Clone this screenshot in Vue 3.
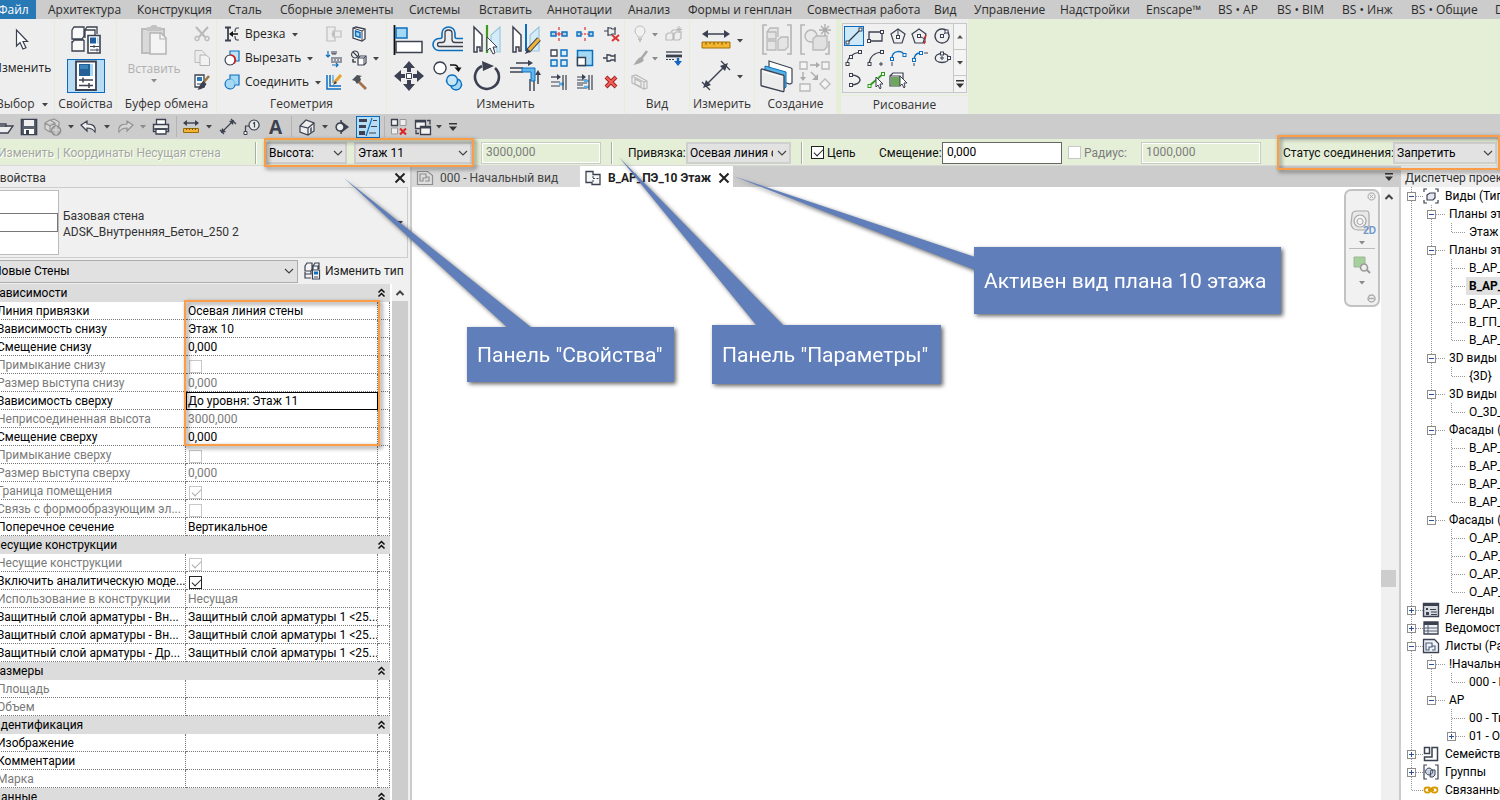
<script setup>
import { h } from 'vue'

const D = '#3b4150'
const B = '#0b6fc0'
const L = '#a5d8f3'
const G = '#b9b9b9'

const s = (d, c = D, w = 1.5, f = 'none') => `<path d="${d}" stroke="${c}" stroke-width="${w}" fill="${f}"/>`
const f = (d, c = D) => `<path d="${d}" fill="${c}"/>`
const node = (x, y, c = D) => `<rect x="${x - 1.5}" y="${y - 1.5}" width="3" height="3" fill="#fff" stroke="${c}"/>`

const icons = {
  arrow: [8, 5, f('M1 1h6l-3 3.5z', '#444')],
  arrowUp: [8, 5, f('M1 4.5h6l-3-3.5z', '#555')],
  arrowDim: [8, 5, f('M1 1h6l-3 3.5z', '#8a8a8a')],
  chevron: [12, 8, s('M2 2l4 4 4-4', '#444', 1.2)],
  chevUp: [10, 8, s('M1.500 6l3.500-3.500 3.500 3.500', '#444', 2)],
  menuDown: [10, 8, f('M1 0h8v1.500H1zM1 3.500h8l-4 4.500z', '#333')],
  close: [12, 12, s('M1.500 1.500l9 9M10.500 1.500l-9 9', '#222', 2)],
  collapse: [9, 10, s('M1.500 4.500l3-3 3 3M1.500 8.500l3-3 3 3', '#111', 1.5)],
  cursor: [14, 22, s('M1.500 1v16l3.500-3.500 3 6.500 3-1.300-3-6.200h4.500z', D, 1.2, '#fff')],
  props: [32, 32, s('M2 6l2-3h10v9l-2 3H2zM15 6l2-3h10v7M2 19l2-3h10M2 17v10h12V16M15 14V6h10v6', D, 1.3, '#fafafa') + s('M18 11.500h12v17.500H18z', D, 1.600, '#fff') + f('M20 13.500h6v6h-6z', '#1f5f9f') + f('M27 13.500h1.500v6H27z', L) + s('M20 22.500h9M20 26h9M24 21v3M27 24.500v3', D, 1)],
  propsBtn: [24, 32, s('M2 1.500h20v28.500H2z', D, 1.8, '#fff') + f('M5 4h11v12H5z', '#245f95') + f('M6 5h8v4H6z', '#3d84bd') + f('M16 4h3v12h-3z', L) + s('M5 20h14M5 25.500h14M9 17.500v5M15 23v5', D, 1.500)],
  paste: [28, 32, s('M2 5h22v24H2z', '#bcbcbc', 2, '#d9d9d9') + f('M7 3h3l2-2h4l2 2h3v4H7z', '#c3c3c3') + s('M10 9h11l5 5v16H10z', '#b4b4b4', 1.500, '#f4f4f4') + s('M20 9v6h6', '#b4b4b4', 1.200)],
  cut: [16, 16, s('M2 1l9 10M14 1L5 11', G, 2) + s('M3 10.500a2 2 0 1 0 .1 0zM13 10.500a2 2 0 1 0 .1 0z', '#bdbdbd', 1.500)],
  copy: [16, 16, s('M1 .500h7l3 3v9H1z', '#bdbdbd', 1, '#ebebeb') + s('M6 5h6l3.500 3v7.500H6z', '#b4b4b4', 1, '#f2f2f2')],
  match: [16, 16, s('M1 1h9v12H1z', D, 1.300, '#fff') + f('M3 3h5v4H3z', '#2a78b8') + s('M3 10h5', D, 1) + s('M15 2l-6 7', '#9a7546', 2.500) + f('M9.500 7l3 3c-2 4-5 5-9 6 2-3 2-6 6-9z', D)],
  cope: [16, 16, s('M1 1.500h6M1 14.500h6M4 1v14', D, 1.800) + s('M15 2h-2c-2 0-2 2-2 4M15 14h-2c-2 0-2-2-2-4', D, 1.200) + s('M6 8h8', '#111', 1.500) + f('M5 8l4-3v6z', '#111')],
  cutGeo: [16, 16, s('M6 1h9v10H6z', B, 1.200, '#bfe4f7') + s('M6 5a5 5 0 1 0 .1 0z', D, 1.200, '#fff') + s('M6.500 5a5 5 0 0 1 3.500 8.500', '#e02020', 1.500)],
  join: [16, 16, s('M6 1h9v10h-4a5 5 0 1 1-5-6z', B, 1.200, L) + s('M6 5c3 0 5 2 5 6', '#69b5e2', 1)],
  wallJoin: [16, 16, s('M1 1h8v4H7v6h2v4H1zM9 5h6v6H9', '#bebebe', 1.200, '#ededed') + f('M5 8l4-3v6z', '#bebebe')],
  wallOpen: [14, 16, s('M1 2l3-1 9 2v10l-3 2-9-3z', D, 1.300, '#fff') + s('M3.500 5l4.500 1.500v5l-4.500-1.500z', B, 1.500, L) + s('M10 5v10M10 5l3-2M1 2l9 3', D, 1)],
  beam: [16, 16, s('M2 1v6M0 5l2 2 2-2', B, 1.200) + s('M6 1v3h4V1M8 1v3', D, 1) + s('M5 8h11M5 12h11', D, 1.200) + s('M5 10h2M8 10h2M11 10h2M14 10h2', D, 1) + s('M6 15h6M10 13l2 2-2 2', B, 1.200)],
  split: [18, 16, s('M5 1a3.500 3.500 0 1 0 .1 0zM3 2l5 5', D, 1.100) + s('M8 8l2-2h6v7l-2 2H8z', D, 1.200, '#fff') + s('M8 8h6v7M14 8l2-2', D, 1) + s('M3 9v3h3', '#111', 1.200)],
  pencilGrid: [16, 16, s('M1 1v14h14M4 1v11h11', B, 1.500) + s('M7 1v8', '#8db9da', 2) + s('M15 1L8 9', '#e6a32c', 3) + f('M9 7l2 2-4 2z', D)],
  hammer: [16, 16, s('M7 7l8 8', '#a5704c', 2.600) + f('M1 6l5-5 5 1-2 1 1 3-4 4-2-3z', '#4d5158')],
  align: [32, 32, s('M1.500 1v30', '#111', 1.800) + s('M3 4h11v10H3z', B, 1.500, L) + s('M3 17.500h26v11H3z', D, 1.500, '#fff')],
  offset: [32, 32, s('M31 14.500h-6q-2 0-2-2V9a6.500 6 0 0 0-13 0v3.500q0 2-2 2H7a6 6 0 0 0 0 12h24', B, 1.600) + s('M31 18.500h-8q-3 0-3-3V9a3.500 3 0 0 0-7 0v6.500q0 3-3 3H7.500q-2 0-2 2t2 2H31', D, 1.300)],
  mirrorPick: [32, 32, s('M3 3l8 8v16H9v-4H6v5H3z', D, 1.500, '#fff') + s('M29 3l-9 8v16h3v-4h3v5h3z', '#9cc7dc', 1.200, '#d3ecf7') + s('M16 1v28', '#3f9b1d', 2.200) + s('M16 13v14l3-3 3 6 2-1-2-6h4z', D, 1, '#fff')],
  mirrorDraw: [32, 32, s('M3 3l8 8v16H9v-4H6v5H3z', D, 1.500, '#fff') + s('M29 3l-9 8v16h9z', '#9cc7dc', 1.200, '#d3ecf7') + s('M16 0v27', B, 2) + s('M29 15L18 27', D, 5) + s('M29 15L19 26', '#f3b33b', 3.200) + f('M17 25l3 3-5 2z', D)],
  move: [32, 32, f('M16 1l6 7h-4v4h-4V8h-4zM16 31l6-7h-4v-4h-4v4h-4zM1 16l7-6v4h4v4H8v4zM31 16l-7-6v4h-4v4h4v4z') + s('M13.500 13.500h5v5h-5z', D, 1, '#fff')],
  copyBig: [32, 32, s('M8 2a6 6 0 1 0 .1 0z', D, 1.300, '#fff') + s('M18 5h4q4 0 4 4', '#111', 1.500) + f('M22.500 7.500l4 4.500 3-4.500z', '#111') + s('M24 19a5.500 5.500 0 1 0 .1 0z', B, 1.300, L) + s('M20 15a5.500 5.500 0 1 0 .1 0z', B, 1.300, '#c7e7f7')],
  rotate: [32, 32, s('M11 6a12 12 0 1 0 13 2', D, 2.600) + f('M11 1l12 5-11 5z')],
  trim: [32, 32, s('M6 3h14M28 24V14', D, 1.500) + f('M18 0l5 3-5 3zM25 15l3-5 3 5z') + s('M0 8h13M0 12h13M20 19v12M24 19v12', D, 1.400) + s('M12 8h13v13h-4v-9h-9z', B, 1, '#63b6ec')],
  splitEl: [18, 16, s('M1 6h5v4H1zM12 6h5v4h-5z', B, 1.400, L) + s('M9 1v3M9 6v4M9 12v3', '#d33', 1.200) + s('M5 8h8', '#d33', 1)],
  splitGap: [18, 16, s('M1 6h4v4H1zM13 6h4v4h-4z', B, 1.400, L) + s('M9 1v3M9 7v2M9 12v3', '#d33', 1.200) + s('M5 8h2M11 8h2', '#d33', 1.200)],
  unpin: [18, 16, s('M2 5h4M6 1v9M6 2h3l1 1h4M6 9h3l1-1h2M13 1v8', D, 1.200) + s('M10 9l7 6M17 9l-7 6', '#df3131', 2)],
  array: [18, 18, s('M1 1h6v6H1z', D, 1.300, '#fff') + s('M11 1h6v6h-6zM1 11h6v6H1zM11 11h6v6h-6z', B, 1.400, '#d6effa')],
  scale: [18, 18, s('M1.500 1.500h15v15h-15z', B, 1.500, L) + s('M1.500 8.500h8v8h-8z', D, 1.400, '#fff')],
  pin: [18, 16, s('M1 8h4M5 4v8M5 5h3l1 1h4M5 11h3l1-1h4M13 4v8', D, 1.300)],
  trim1: [18, 16, s('M1 3h7', D, 1.300) + f('M7 0l4 3-4 3z') + s('M1 8h9M1 12h9', D, 1) + s('M9 10h5', '#55aee6', 3) + s('M13 1v15M16 1v15', D, 1.200)],
  trim2: [18, 16, s('M1 3h6M1 11h6', D, 1.200) + f('M6 0l4 3-4 3z') + s('M1 6h10M1 9h10M1 14h10', D, 1) + s('M8 7h5M8 13h5', '#55aee6', 2.500) + s('M13 1v15M16 1v15', D, 1.200)],
  del: [14, 14, s('M2 2l10 10M12 2L2 12', '#a02020', 4) + s('M2.500 2.500l9 9M11.500 2.500l-9 9', '#f25e57', 2.200)],
  bulb: [12, 16, s('M4 11c0-2-3-3-3-6a5 5 0 0 1 10 0c0 3-3 4-3 6z', '#bdbdbd', 1, '#f2f2f2') + s('M4 13h4M5 15h2', '#b5b5b5', 1.500)],
  hideEl: [18, 16, s('M1 9l2-2h5v6l-1 1H1zM9 8l2-2h5v6l-2 2H9zM6 6l2-2h4', '#b9b9b9', 1.200) + s('M14 0v7M11 3.500h6M12 1.500l4 4M16 1.500l-4 4', '#b5b5b5', 1)],
  brush: [16, 16, s('M15 1l-6 8', '#a9a9a9', 2.500) + f('M9 7l3 3c-2 3-6 4-11 5 3-2 3-6 8-8z', '#a9a9a9')],
  lines: [18, 16, s('M1 2h16', D, 1.300) + s('M1 6h16', D, 2.800) + s('M1 9.500h2M4 9.500h2M7 9.500h2', D, 1) + s('M13 8v4', '#1565c0', 2.500) + f('M9 11h8l-4 5z', '#1565c0')],
  box3: [18, 16, s('M1 2l4-1 11 6v7l-3 1L1 9zM1 2l12 6v7M13 8l3-1M4 5v5l6 3V8z', '#b9b9b9', 1.200)],
  measure: [32, 22, s('M4 5h24', D, 1.500) + f('M2 5l6-4v8zM30 5l-6-4v8z') + s('M2 13h28v6H2z', '#a0700b', 1, '#f5b62f') + s('M6 13v3M10 13v2M14 13v3M18 13v2M22 13v3M26 13v2', '#8a5c00', 1)],
  dim: [32, 32, s('M6 25L25 6', D, 1.500) + s('M2 22l8 8M21 1l9 9', D, 1.300) + f('M3 28l3-8 5 5zM28 3l-8 3 5 5z')],
  group: [32, 32, s('M6 1H2v29h4M26 1h4v29h-4', '#b5b5b5', 1.600) + s('M6 8l3-4h8v9M6 8h9v7H6zM6 17h9v9H6zM17 16l3-3h7v10l-3 3h-7z', '#b9b9b9', 1.300, '#e4e4e4')],
  groupNew: [32, 32, s('M6 1H2v29h4M30 17v13h-4', '#b5b5b5', 1.600) + s('M12 6a6 6 0 1 0 .1 0z', '#b9b9b9', 1.400, '#eaeaea') + s('M14 15l3-3h11v11l-3 3H14z', '#b9b9b9', 1.300, '#e1e1e1') + s('M26 0v12M20 6h12M22 2l8 8M30 2l-8 8', '#aaa', 1.300)],
  layers: [34, 32, s('M9 1l22 7q1 0 1 1v14l-2 1L9 18z', D, 1.200, '#fff') + s('M5 6l21 6v15l-2 2L5 23z', B, 1, '#56b3e8') + s('M1 10q0-1 1-1l21 6q1 0 1 1v14q0 2-1 1.500L2 26q-1 0-1-1z', D, 1.300, '#ececec') + s('M3 11.500l19 5.500', '#fff', 1)],
  assembly: [32, 32, s('M1 2h7v7H1zM23 2h7v7h-7zM1 24h10v7H1zM21 24l5-5 5 5-5 5z', '#b9b9b9', 1.400, '#f4f4f4') + s('M11 5h8M4 12v7M12 12l6 6', '#aaa', 1.300) + f('M17 2l4 3-4 3zM1 17l3 4 3-4zM19 14v6h-6z', '#aaa')],
  gLine: [20, 20, s('M4 16L16 4', '#27394d', 1.300) + node(3.500, 16.500) + node(16.500, 3.500)],
  gRect: [18, 16, s('M2 4h13v9H2z', D, 1.300) + node(2, 13) + node(15, 4)],
  gPolyIn: [18, 16, s('M9 1l7 5-3 9H5L2 6z', D, 1.200) + s('M9 1v8', D, 1) + node(9, 9)],
  gPolyOut: [18, 16, s('M8 1l7 5-3 9H4L1 6z', D, 1.200) + s('M8 8l6 3v4', D, 1) + node(8, 8) + s('M15 7l-1 4M14 13l-1 3', '#d22', 1.300)],
  gCircle: [18, 16, s('M9 1a7 7 0 1 0 .1 0z', D, 1.300) + s('M9 8l4-4', D, 1) + node(9, 8) + node(13.500, 3.500)],
  gArc3: [18, 16, s('M2 14Q3 4 15 2', D, 1.200) + node(2.500, 14) + node(6, 7) + node(15, 2)],
  gArcC: [18, 16, s('M2 14Q3 3 15 2', D, 1.200) + node(2.500, 14) + node(15, 2) + s('M12 14h4M14 12v4', D, 1)],
  gTan: [18, 16, s('M3 8C3 0 14 0 15 5', B, 1.500) + s('M3 12v4', D, 1) + node(3, 9, B) + node(15.500, 5, B)],
  gFillet: [18, 16, s('M3 11Q3 3 9 3', B, 1.500) + s('M3 13v3M13 3h4', D, 1) + node(3, 10, B) + node(10, 3, B)],
  gEllipse: [18, 16, s('M9 3.500c9 0 9 9 0 9s-9-9 0-9z', D, 1.300) + s('M7 8h4M9 6v4', D, 1) + node(9, 3.500) + node(16, 8)],
  gHalf: [18, 16, s('M6 3c12 0 12 10 0 10', D, 1.400) + node(6, 3) + node(6, 13)],
  gPick: [18, 16, s('M2 14L16 2', '#2d9d1b', 1.800) + node(2.500, 14, '#2d9d1b') + node(16, 2, '#2d9d1b') + s('M9 5v10l2-2 2 4 1-1-1-4h3z', D, 1, '#fff')],
  gFace: [18, 16, s('M1 4l3-3h10v9M1 4h10v10H1z', D, 1.200, '#fff') + f('M2 5h9v9H2z', '#6fa55c') + s('M11 4v10l2-2 2 4 1-1-1-4h3z', D, 1, '#fff')],
  open: [22, 18, s('M0 15V4h6l2 2h6v3M0 15l5-7h16l-5 7z', D, 1.300, '#eee')],
  save: [18, 18, s('M1.500 1.500h15v15h-15z', D, 1.600, '#59606e') + f('M4 2h10v6H4z', '#f0f0f0') + f('M4 11h10v5H4z', '#fff') + f('M6 12h3v4H6z')],
  sync: [18, 18, s('M1 5l5-3 5 3v6l-5 3-5-3zM1 5l5 3 5-3M6 8v6M7 2l3-1 5 3v4', '#949494', 1.200, '#d7d7d7') + s('M12 8a4.500 4.500 0 1 0 .1 0z', '#8c8c8c', 1.500, '#b8b8b8') + s('M8 12h8M12 8v9', '#dcdcdc', 1)],
  undo: [18, 14, s('M1 5l6-4v3c6 0 9 2 8 8-2-3-4-4-8-4v3z', D, 1.200, '#f0f0f0')],
  redo: [18, 14, s('M17 5l-6-4v3c-6 0-9 2-8 8 2-3 4-4 8-4v3z', '#929292', 1.200, '#d5d5d5')],
  print: [18, 18, s('M4.500 1.500h9V7h-9z', D, 1.300, '#fff') + s('M1.500 6.500h15v7h-15z', D, 1.400, '#eee') + s('M4 11h10v5H4z', D, 1.300, '#fff') + s('M2 11h14', D, 1.500)],
  measureS: [18, 14, s('M2 3h14', D, 1.400) + f('M1 3l4-3v6zM17 3l-4-3v6z') + s('M1.500 8.500h15v4h-15z', '#9b6b0c', 1, '#f0b535') + s('M4.500 8v2M7.500 8v2M10.500 8v2M13.500 8v2', '#805600', 1)],
  dimS: [18, 16, s('M3 13L14 2M1 11l4 4M12 0l5 5', D, 1.200) + f('M2 14l1-5 4 4zM15 1l-5 1 4 4z')],
  tag: [18, 16, s('M11 1a5 5 0 1 0 .1 0z', D, 1.200, '#e9e9e9') + s('M11.500 8.500V3.500L10 4.500', D, 1.200) + s('M6 7H2.500v6', D, 1.200) + s('M1 12.500h3v3H1z', D, 1, '#fff')],
  house: [18, 18, s('M2 8l6-6 8 3v8l-6 4-8-3z', D, 1.200, '#eee') + s('M2 8l8 2 6-5M10 10v7', D, 1.200) + f('M12 10l2-1v5l-2 1z', '#6a7180')],
  section: [16, 14, f('M7 1l8 6-8 6z') + s('M6 3a4 4 0 1 0 .1 0z', D, 1.500, '#eee') + s('M7 0v3M7 11v3', D, 1.500)],
  thin: [20, 18, f('M1 1h8v3H1zM1 7h7v3H1zM1 13h6v4H1z') + s('M14 0L8 18', B, 1.200) + s('M15 2.500h4M13 8.500h6M11 15h7', D, 1.200)],
  closeHid: [18, 18, s('M1.500 1.500h6v6h-6z', D, 1.300, '#f3f3f3') + s('M10 1.500h6v6h-6zM1.500 10h6v6h-6z', '#999', 1, '#eee') + s('M10 10.500l6 6M16 10.500l-6 6', '#df2020', 2)],
  switchW: [18, 18, s('M1.500 2.500h10v8h-10z', D, 1.300, '#f3f3f3') + s('M1.500 3.500h10', D, 2) + s('M6.500 8.500h10v8h-10z', D, 1.300, '#f3f3f3') + s('M6.500 9.500h10', D, 2) + s('M13 2.500h3v4M2 12v3.500h3', D, 1.300)],
  types: [16, 18, s('M1 4l2-3h5v6l-1 2H1zM9 4l2-3h4v6M1 12h6V9M1 10v6h6M9 9V4h5v4', D, 1.200, '#f4f4f4') + s('M8.500 8h7v9h-7z', D, 1.200, '#fff') + f('M10 9.500h4v3h-4z', B) + s('M10 15h4', D, 1)],
  sheet: [16, 16, s('M.500 1.500h10l5 4v9H.500z', '#8e8e8e', 1.200, '#dedede') + s('M3 4h6v4H6v3H3zM9 7h3v4H8', '#8e8e8e', 1.200)],
  plan: [16, 16, s('M1 1.500h7v3h7v10H7v-2H1z', D, 1.300, '#f7f7f7') + s('M8 6v2M8 10v2M8 8.500h2M11.500 8.500h2', D, 1)],
  views: [16, 16, s('M1 4V1h3M12 1h3v3M1 12v3h3M15 12v3h-3', D, 1.200) + s('M4 7l3-2h5v5l-2 2H4z', D, 1.200, '#e7e7ef')],
  legend: [16, 16, s('M.500 1.500h15v13H.500z', D, 1.400, '#d8dbe0') + f('M1 1h14v3H1zM3 6h2v2H3zM3 10h3v3H3z') + s('M7 7.500h6M8 10h6M8 12.500h6', D, 1)],
  sched: [16, 14, s('M1 1h14v12H1z', D, 1.300, '#eef2f8') + f('M1 1h14v3H1z') + s('M1 7h14M1 10h14M5 3v10', '#59616f', 1)],
  sheets: [16, 16, s('M.500 1.500h11l4 4v9H.500z', D, 1.300, '#f0f3f8') + s('M3 5h6v4H6v3H3zM9 8h3v4H9', '#485a7a', 1.100)],
  fam: [16, 16, s('M1.500 1.500h5v6h-5zM9 1.500h5.500v13H1.500V11H9z', D, 1.500, '#fff')],
  groups: [16, 16, s('M4 1H1v14h3M12 1h3v14h-3', D, 1.200) + s('M6 4a3.500 3.500 0 1 0 .1 0zM8 6h4v5l-2 2H7z', D, 1, '#c9d6e6')],
  links: [16, 8, s('M5 1.500h-1a2.500 2.500 0 0 0 0 5h1a2.500 2.500 0 0 0 0-5zM12 1.500h-1a2.500 2.500 0 0 0 0 5h1a2.500 2.500 0 0 0 0-5zM5 4h6', '#d79a00', 1.800)],
  wheel: [26, 28, s('M3 5q0-4 5-4h10q2 0 2 4v11q0 4-5 4H9q-6 0-7-6z', '#aaa', 1.200, '#e9e9e9') + s('M11 5a6 6 0 1 0 .1 0z', '#aaa', 1.200, '#f5f5f5') + s('M11 8.500a3 3 0 1 0 .1 0z', '#aaa', 1.200)],
  zoomReg: [18, 18, s('M1 1h11v10H1z', '#9bb896', 1, '#a5cf9b') + s('M11 8a3.500 3.500 0 1 0 .1 0z', '#999', 1.500, '#eee') + s('M14 14l3 3', '#999', 2)],
  navX: [9, 9, s('M4.500 1a3.500 3.500 0 1 0 .1 0z', '#bbb', 1.300) + s('M3 3l3 3M6 3L3 6', '#aaa', 1)],
  navM: [9, 9, s('M4.500 1a3.500 3.500 0 1 0 .1 0zM2 4.500h5', '#aaa', 1.300)],
}

const Icon = (p) => {
  const [w, ht, body] = icons[p.name]
  return h('svg', { width: w, height: ht, viewBox: `0 0 ${w} ${ht}`, 'aria-hidden': 'true', innerHTML: body })
}
Icon.props = ['name']

const tabs = [
  ['Архитектура', 89], ['Конструкция', 91], ['Сталь', 52], ['Сборные элементы', 129], ['Системы', 70], ['Вставить', 68],
  ['Аннотации', 81], ['Анализ', 60], ['Формы и генплан', 119], ['Совместная работа', 127], ['Вид', 40], ['Управление', 86],
  ['Надстройки', 86], ['Enscape™', 72], ['BS • АР', 59], ['BS • BIM', 65], ['BS • Инж', 69], ['BS • Общие', 84], ['DiRoots', 60],
]

const geoRows = [['cope', 'Врезка'], ['cutGeo', 'Вырезать'], ['join', 'Соединить']]
const geoIcons = ['wallJoin', 'wallOpen', '', 'beam', 'split', 'arrow', 'pencilGrid', 'hammer', '']
const modBig = ['align', 'offset', 'mirrorPick', 'mirrorDraw', 'move', 'copyBig', 'rotate', 'trim']
const modSmall = ['splitEl', 'splitGap', 'unpin', 'array', 'scale', 'pin', 'trim1', 'trim2', 'del']
const viewIcons = ['bulb', 'arrowDim', 'hideEl', 'brush', 'arrowDim', 'lines', 'box3', '', '']
const createIcons = ['group', 'groupNew', 'layers', 'assembly']
const drawIcons = ['gLine', 'gRect', 'gPolyIn', 'gPolyOut', 'gCircle', 'gArc3', 'gArcC', 'gTan', 'gFillet', 'gEllipse', 'gHalf', 'gPick', 'gFace']

const quick = [
  ['open', 29], ['save', 24], ['sync', 24], ['arrow', 11], ['undo', 26], ['arrow', 9], ['redo', 27], ['arrowDim', 9], ['print', 28],
  ['sep', 2], ['measureS', 28], ['arrow', 8], ['dimS', 30], ['tag', 18], ['A', 29], ['sep', 2], ['house', 30], ['arrow', 6],
  ['section', 28], ['thin', 24], ['sep', 8], ['closeHid', 22], ['switchW', 26], ['arrow', 6], ['menuDown', 22],
]

const cover = 'Защитный слой арматуры 1 <25...'
const groups = [
  { title: 'Зависимости', rows: [
    ['Линия привязки', 'Осевая линия стены'], ['Зависимость снизу', 'Этаж 10'], ['Смещение снизу', '0,000'],
    ['Примыкание снизу', false, 1], ['Размер выступа снизу', '0,000', 1], ['Зависимость сверху', 'До уровня: Этаж 11', 0, 1],
    ['Неприсоединенная высота', '3000,000', 1], ['Смещение сверху', '0,000'], ['Примыкание сверху', false, 1],
    ['Размер выступа сверху', '0,000', 1], ['Граница помещения', true, 1], ['Связь с формообразующим эл...', false, 1],
    ['Поперечное сечение', 'Вертикальное'],
  ] },
  { title: 'Несущие конструкции', rows: [
    ['Несущие конструкции', true, 1], ['Включить аналитическую моде...', true], ['Использование в конструкции', 'Несущая', 1],
    ['Защитный слой арматуры - Вн...', cover], ['Защитный слой арматуры - Вн...', cover], ['Защитный слой арматуры - Др...', cover],
  ] },
  { title: 'Размеры', rows: [['Площадь', '', 1], ['Объем', '', 1]] },
  { title: 'Идентификация', rows: [['Изображение', ''], ['Комментарии', ''], ['Марка', '', 1]] },
  { title: 'Данные', rows: [] },
]

// Guide codes per column: v = line, t = branch, l = last branch, _ = empty; trailing sign = expander.
const tree = [
  ['t', '-', 'Виды (Типы)', 'views'],
  ['vt', '-', 'Планы этажей'], ['vvl', '', 'Этаж 10'],
  ['vt', '-', 'Планы этажей'], ['vvt', '', 'В_АР_ПЭ'], ['vvt', '', 'В_АР_ПЭ', '', 1], ['vvt', '', 'В_АР_ПЭ'], ['vvt', '', 'В_ГП_ПЭ'], ['vvl', '', 'В_АР_ПЭ'],
  ['vt', '-', '3D виды (В'], ['vvl', '', '{3D}'],
  ['vt', '-', '3D виды (О'], ['vvl', '', 'О_3D_В'],
  ['vt', '-', 'Фасады (В'], ['vvt', '', 'В_АР_Ф'], ['vvt', '', 'В_АР_Ф'], ['vvt', '', 'В_АР_Ф'], ['vvl', '', 'В_АР_Ф'],
  ['vl', '-', 'Фасады (О'], ['v_t', '', 'О_АР_Ф'], ['v_t', '', 'О_АР_Ф'], ['v_t', '', 'О_АР_Ф'], ['v_l', '', 'О_АР_Ф'],
  ['t', '+', 'Легенды', 'legend'], ['t', '+', 'Ведомости', 'sched'], ['t', '-', 'Листы (Ра', 'sheets'],
  ['vt', '-', '!Начальный'], ['vvl', '', '000 - Н'],
  ['vl', '-', 'АР'], ['v_t', '', '00 - Ти'], ['v_l', '+', '01 - Об'],
  ['t', '+', 'Семейства', 'fam'], ['t', '+', 'Группы', 'groups'], ['l', '', 'Связанные', 'links'],
]
const guide = { v: 'M5.500 0v18', t: 'M5.500 0v18M6 9.500h14', l: 'M5.500 0v9M6 9.500h14', _: '' }
</script>

<template>
  <div class="viewport">
    <div class="window">
      <nav class="tabs">
        <button class="file">Файл</button>
        <button v-for="[name, w] in tabs" :key="name" class="tab" :style="{ width: w + 'px' }">{{ name }}</button>
      </nav>

      <div class="ribbon">
        <section class="panel p-select">
          <div class="body">
            <button class="big"><Icon name="cursor" /><span>Изменить</span></button>
          </div>
          <h2 class="caption">Выбор <Icon name="arrow" /></h2>
        </section>
        <section class="panel p-props">
          <div class="body grid2">
            <button aria-label="Свойства типа"><Icon name="props" /></button>
            <button class="pressed" aria-label="Свойства"><Icon name="propsBtn" /></button>
          </div>
          <h2 class="caption">Свойства</h2>
        </section>
        <section class="panel p-clip">
          <div class="body">
            <button class="big dim"><Icon name="paste" /><span>Вставить</span><Icon name="arrowDim" /></button>
            <div class="grid3">
              <button aria-label="Вырезать"><Icon name="cut" /></button>
              <button aria-label="Копировать"><Icon name="copy" /></button>
              <button aria-label="Копировать свойства"><Icon name="match" /></button>
            </div>
          </div>
          <h2 class="caption">Буфер обмена</h2>
        </section>
        <section class="panel p-geo">
          <div class="body">
            <div class="geo-rows">
              <button v-for="[ic, t] in geoRows" :key="t"><Icon :name="ic" /><span>{{ t }}</span><Icon name="arrow" /></button>
            </div>
            <div class="grid3 geo-icons">
              <button v-for="(n, i) in geoIcons" :key="i" :aria-label="n"><Icon v-if="n" :name="n" /></button>
            </div>
          </div>
          <h2 class="caption">Геометрия</h2>
        </section>
        <section class="panel p-mod">
          <div class="body">
            <div class="grid2 mod-big">
              <button v-for="n in modBig" :key="n" :aria-label="n"><Icon :name="n" /></button>
            </div>
            <div class="grid3 mod-small">
              <button v-for="n in modSmall" :key="n" :aria-label="n"><Icon :name="n" /></button>
            </div>
          </div>
          <h2 class="caption">Изменить</h2>
        </section>
        <section class="panel p-view">
          <div class="body grid3 view-icons">
            <button v-for="(n, i) in viewIcons" :key="i" :aria-label="n"><Icon v-if="n" :name="n" /></button>
          </div>
          <h2 class="caption">Вид</h2>
        </section>
        <section class="panel p-meas">
          <div class="body grid2 meas-icons">
            <button aria-label="Измерить"><Icon name="measure" /></button><button aria-label="Ещё"><Icon name="arrow" /></button>
            <button aria-label="Размер"><Icon name="dim" /></button><button aria-label="Ещё"><Icon name="arrow" /></button>
          </div>
          <h2 class="caption">Измерить</h2>
        </section>
        <section class="panel p-create">
          <div class="body grid2 create-icons">
            <button v-for="n in createIcons" :key="n" :aria-label="n"><Icon :name="n" /></button>
          </div>
          <h2 class="caption">Создание</h2>
        </section>
        <section class="panel p-draw">
          <div class="gallery">
            <div class="tools">
              <button v-for="(n, i) in drawIcons" :key="n" :class="{ on: i === 0 }" :aria-label="n"><Icon :name="n" /></button>
            </div>
            <div class="gal-scroll">
              <button aria-label="Вверх"><Icon name="arrowUp" /></button>
              <button aria-label="Вниз"><Icon name="arrow" /></button>
              <button aria-label="Развернуть"><Icon name="menuDown" /></button>
            </div>
          </div>
          <h2 class="caption">Рисование</h2>
        </section>
      </div>

      <div class="quick">
        <template v-for="([n, w], i) in quick" :key="i">
          <i v-if="n === 'sep'" class="qsep" :style="{ width: w + 'px' }"></i>
          <button v-else :class="{ lit: n === 'thin' }" :style="{ width: w + 'px' }" :aria-label="n">
            <b v-if="n === 'A'">A</b><Icon v-else :name="n" />
          </button>
        </template>
      </div>

      <form class="options" @submit.prevent>
        <span class="context">Изменить | Координаты Несущая стена</span>
        <i class="rule"></i>
        <span class="drop w-height"><select aria-label="Высота"><option>Высота:</option></select><Icon name="chevron" /></span>
        <span class="drop w-level"><select aria-label="Этаж"><option>Этаж 11</option></select><Icon name="chevron" /></span>
        <input class="field off" aria-label="Высота стены" value="3000,000" disabled />
        <i class="rule r2"></i>
        <label class="l-snap" for="snap">Привязка:</label>
        <span class="drop w-snap"><select id="snap"><option>Осевая линия стены</option></select><Icon name="chevron" /></span>
        <i class="rule r3"></i>
        <label class="check l-chain"><input type="checkbox" checked />Цепь</label>
        <label class="l-shift" for="shift">Смещение:</label>
        <input id="shift" class="field" value="0,000" />
        <label class="check l-radius"><input type="checkbox" disabled />Радиус:</label>
        <input class="field off" aria-label="Радиус" value="1000,000" disabled />
        <label class="l-status" for="status">Статус соединения:</label>
        <span class="drop w-status"><select id="status"><option>Запретить</option></select><Icon name="chevron" /></span>
      </form>

      <main class="work">
        <aside class="props">
          <header class="head"><span>Свойства</span><button aria-label="Закрыть"><Icon name="close" /></button></header>
          <button class="type">
            <span class="preview"><span class="wall"></span></span>
            <span class="names">Базовая стена<br />ADSK_Внутренняя_Бетон_250 2</span>
            <Icon name="arrow" />
          </button>
          <div class="filter">
            <span class="drop"><select aria-label="Фильтр"><option>Новые Стены</option></select><Icon name="chevron" /></span>
            <button><Icon name="types" />Изменить тип</button>
          </div>
          <div class="sheet">
            <table>
              <colgroup><col class="c-name" /><col /><col class="c-end" /></colgroup>
              <tbody v-for="g in groups" :key="g.title">
                <tr class="group"><th colspan="3"><div><span>{{ g.title }}</span><Icon name="collapse" /></div></th></tr>
                <tr v-for="(r, i) in g.rows" :key="i" :class="{ off: r[2], current: r[3] }">
                  <td>{{ r[0] }}</td>
                  <td>
                    <input v-if="typeof r[1] === 'boolean'" type="checkbox" :checked="r[1]" :disabled="!!r[2]" :aria-label="r[0]" />
                    <template v-else>{{ r[1] }}</template>
                  </td>
                  <td></td>
                </tr>
              </tbody>
            </table>
            <div class="scroll"><button aria-label="Вверх"><Icon name="chevUp" /></button><span class="thumb"></span></div>
          </div>
        </aside>

        <section class="center">
          <div class="docs">
            <button class="doc"><Icon name="sheet" />000 - Начальный вид</button>
            <button class="doc active"><Icon name="plan" /><span>В_АР_ПЭ_10 Этаж</span><Icon name="close" /></button>
            <button class="more" aria-label="Список видов"><Icon name="menuDown" /></button>
          </div>
          <div class="canvas">
            <div class="navbar">
              <Icon name="navX" class="end" />
              <button class="wheel" aria-label="Штурвал"><Icon name="wheel" /><b>2D</b></button>
              <Icon name="arrowDim" />
              <hr />
              <button class="region" aria-label="Зумирование"><Icon name="zoomReg" /></button>
              <Icon name="arrowDim" />
              <Icon name="navM" class="end last" />
            </div>
            <div class="vscroll"><button aria-label="Вверх"><Icon name="chevUp" /></button><span class="vthumb"></span></div>
          </div>
        </section>

        <aside class="browser">
          <header class="head">Диспетчер проектов</header>
          <ul>
            <li v-for="([g, sign, text, ic, cur], i) in tree" :key="i">
              <span v-for="(c, k) in g.split('')" :key="k" class="cell" :class="{ short: g.length === 1 }">
                <svg width="20" height="18" aria-hidden="true"><path :d="guide[c]" class="dots" /></svg>
                <button v-if="sign && k === g.length - 1" class="exp" :aria-label="sign">
                  <svg width="7" height="7" aria-hidden="true"><path :d="sign === '+' ? 'M1 3.500h5M3.500 1v5' : 'M1 3.500h5'" stroke="#2c4f9a" /></svg>
                </button>
              </span>
              <span v-if="ic" class="ticon"><Icon :name="ic" /></span>
              <span class="ttext" :class="{ cur }">{{ text }}</span>
            </li>
          </ul>
        </aside>
      </main>
    </div>

    <div class="notes">
      <span class="mark m1"></span>
      <span class="mark m2"></span>
      <span class="mark m3"></span>
      <svg class="tails" aria-hidden="true">
        <path d="M344 178L532 328H508z M619 157L784 326H757z M733 176L975 257V270z" fill="#5f7eba" />
      </svg>
      <p class="note n1">Панель "Свойства"</p>
      <p class="note n2">Панель "Параметры"</p>
      <p class="note n3">Активен вид плана 10 этажа</p>
    </div>
  </div>
</template>

<style>
html, body { margin: 0; overflow: hidden; }
</style>

<style scoped>
.viewport { position: relative; height: 100vh; overflow: hidden; background: #ccc; font: 12px/16px "Open Sans", "Noto Sans", sans-serif; color: #222; }
.viewport * { box-sizing: border-box; }
.window { margin-left: -12px; height: 100%; display: flex; flex-direction: column; white-space: nowrap; }
button { font: inherit; color: inherit; border: 0; padding: 0; margin: 0; background: none; display: flex; align-items: center; justify-content: center; white-space: nowrap; min-width: 0; }
svg { flex: none; display: block; overflow: visible; }
select, input { font: inherit; color: #000; margin: 0; }

.tabs { display: flex; height: 19px; flex: none; color: #2b2b2b; overflow: hidden; }
.tabs button { justify-content: flex-start; flex: none; }
.file { width: 48px; padding-left: 10px; margin-right: 12px; background: #2779b5; color: #fff; }

.ribbon { display: flex; height: 95px; flex: none; background: #e5efd7; }
.panel { display: flex; flex-direction: column; background: #eee; border-right: 1px solid #e5efd7; flex: none; }
.body { height: 75px; padding-top: 3px; display: flex; }
.caption { margin: 0; height: 20px; font-size: 12px; font-weight: 400; display: flex; align-items: center; justify-content: center; gap: 6px; color: #333; }
.grid2, .grid3 { display: grid; grid-auto-rows: 36px; }
.grid3 { grid-auto-rows: 24px; }
.p-select { width: 67px; }
.p-select .caption { justify-content: flex-start; padding-left: 8px; }
.big { flex-direction: column; justify-content: flex-start; gap: 5px; height: 72px; padding-top: 2px; width: 74px; flex: none; }
.p-select .big { padding-top: 7px; gap: 9px; width: 68px; }
.big.dim { color: #b0b0b0; }
.big.dim span { margin-bottom: -4px; }
.p-props { width: 62px; }
.p-props .body { justify-content: center; }
.pressed { width: 38px; height: 34px; background: #b9dcf5; border: 1px solid #0a6cbf; margin-top: 1px; }
.p-clip { width: 100px; }
.p-clip .grid3 { width: 22px; }
.p-geo { width: 170px; }
.geo-rows { width: 103px; padding-left: 7px; flex: none; }
.geo-rows button { height: 24px; gap: 5px; }
.geo-icons { grid-template-columns: 28px 22px 12px; }
.p-mod { width: 238px; }
.mod-big { grid-template-columns: repeat(4, 39px); padding-left: 2px; margin-right: 1px; }
.mod-small { grid-template-columns: repeat(3, 26px); }
.p-view { width: 65px; }
.view-icons { grid-template-columns: 24px 6px 32px; padding-left: 3px; }
.p-meas { width: 65px; }
.meas-icons { grid-template-columns: 40px 8px; padding-left: 6px; }
.p-create { width: 82px; }
.create-icons { grid-template-columns: 38px 38px; padding-left: 3px; }
.p-draw { width: 128px; margin-left: 4px; }
.gallery { height: 70px; margin: 4px 1px 2px; border: 1px solid #c6c8c6; background: #f0f0f0; display: flex; box-shadow: 0 2px 0 #eee; }
.p-draw .caption { border-top: 1px solid #e5efd7; height: 19px; }
.tools { flex: 1; display: grid; grid-template-columns: repeat(5, 22px); grid-auto-rows: 22px; padding-top: 1px; }
.tools .on { background: #cfe8f8; border: 1px solid #0a6cbf; width: 20px; height: 20px; margin: 1px; }
.gal-scroll { width: 14px; display: grid; grid-template-rows: 25px 26px 17px; border-left: 1px solid #c6c8c6; background: #fff; }
.gal-scroll button + button { border-top: 1px solid #c6c8c6; }
.gal-scroll button { background: #f4f4f4; }

.quick { display: flex; height: 25px; flex: none; align-items: center; color: #333; }
.quick button { height: 24px; flex: none; }
.quick .lit { background: #b9dcf5; border: 1px solid #0a6cbf; height: 22px; }
.quick b { font: 700 19px/22px "Open Sans", sans-serif; color: #3b4150; }
.qsep { height: 21px; flex: none; display: flex; justify-content: center; }
.qsep::before { content: ""; width: 1px; background: #b4b4b4; }

.options, .work { font-family: Roboto, "Open Sans", sans-serif; }
.options { display: flex; height: 26px; flex: none; align-items: center; padding-top: 1px; background: #e5efd7; color: #111; }
.context { width: 267px; padding-left: 10px; color: #a3a79e; text-shadow: 1px 1px 0 #fff; flex: none; }
.rule { width: 2px; height: 22px; background: #a9ada5; border-right: 1px solid #fff; flex: none; margin-right: 8px; }
.drop { position: relative; display: block; height: 22px; flex: none; }
.drop select { appearance: none; width: 100%; height: 100%; background: #e2e2e2; border: 2px solid #cfcfcf; border-radius: 0; padding: 0 16px 0 2px; outline: 0; }
.drop svg { position: absolute; right: 3px; top: 7px; pointer-events: none; }
.w-height { width: 82px; margin-right: 7px; }
.w-level { width: 118px; margin-right: 9px; }
.field { width: 120px; height: 22px; border: 1px solid #666; background: #fff; padding: 0 4px 2px; outline: 0; flex: none; }
.field.off { border-color: #c9ccc5; background: #e5efd7; color: #7d7d7d; box-shadow: inset 0 0 0 1px #fff; }
.r2 { margin: 0 15px 0 10px; }
.l-snap { width: 58px; }
.w-snap { width: 105px; margin-right: 10px; }
.options label { flex: none; }
.check { display: flex; align-items: center; gap: 3px; }
input[type="checkbox"] { appearance: none; width: 13px; height: 13px; border: 1px solid #222; background: #fff; flex: none; display: block; position: relative; }
input[type="checkbox"]:disabled { border-color: #c8c8c8; }
input[type="checkbox"]:checked::before { content: ""; position: absolute; left: 2px; top: 2px; width: 8px; height: 4px; border-left: 1px solid #222; border-bottom: 1px solid #222; transform: rotate(-45deg); }
input[type="checkbox"]:checked:disabled::before { border-color: #aaa; }
.l-chain { width: 68px; }
.l-shift { width: 63px; }
.l-radius { width: 73px; margin-left: 6px; color: #7d7d7d; }
.l-status { margin-left: auto; width: 110px; }
.w-status { width: 104px; margin-right: 3px; }

.work { flex: 1; display: flex; min-height: 0; border-top: 1px solid #d9d9d9; }
.head { height: 21px; padding-top: 2px; background: #eee; display: flex; align-items: center; color: #333; flex: none; }
.props { width: 424px; flex: none; border-right: 2px solid #ccc; padding-right: 2px; background: #f0f0f0; display: flex; flex-direction: column; min-height: 0; }
.props .head { padding-left: 4px; padding-right: 2px; justify-content: space-between; }
.type { height: 71px; border: 1px solid #ccc; justify-content: flex-start; padding: 0 3px 0 0; flex: none; text-align: left; color: #333; }
.preview { width: 70px; height: 65px; background: #fff; border: 1px solid #bbb; display: flex; align-items: center; }
.wall { width: 68px; height: 19px; border: 1px solid #777; }
.names { flex: 1; padding-left: 4px; padding-top: 2px; }
.filter { display: flex; height: 26px; flex: none; align-items: center; gap: 6px; }
.filter .drop { width: 310px; height: 23px; }
.filter select { border: 1px solid #adadad; background: #e1e1e1; padding-left: 4px; }
.filter button { gap: 5px; }
.sheet { display: flex; flex: 1; min-height: 0; overflow: hidden; background: #fff; }
table { width: 402px; table-layout: fixed; border-collapse: separate; border-spacing: 0; align-self: flex-start; color: #000; }
.c-name { width: 198px; }
.c-end { width: 12px; }
td { height: 18px; padding: 1px 0 0 2px; line-height: 16px; border-bottom: 1px dotted #777; border-right: 1px dotted #777; overflow: hidden; }
td:first-child { padding-left: 9px; }
.off td { color: #7a7a7a; }
td input { margin: 2px 0 0 1px; }
.current td:nth-child(2) { outline: 1px solid #000; outline-offset: -1px; }
th { height: 18px; padding: 0 4px; background: #dcdcdc; font-weight: 400; }
th div { display: flex; justify-content: space-between; align-items: center; height: 18px; }
.scroll { width: 16px; margin-left: 2px; background: #f0f0f0; display: flex; flex-direction: column; }
.scroll button { height: 17px; }
.thumb { flex: 1; background: #cdcdcd; }

.center { flex: 1; min-width: 0; display: flex; flex-direction: column; }
.docs { height: 21px; display: flex; background: #ccc; flex: none; }
.doc { width: 168px; background: #d9d9d9; justify-content: flex-start; gap: 7px; padding: 2px 0 0 5px; color: #444; }
.doc.active { width: 153px; background: #fff; font-weight: 700; color: #222; }
.more { margin-left: auto; padding-right: 5px; }
.canvas { flex: 1; background: #fff; position: relative; display: flex; justify-content: flex-end; }
.vscroll { width: 18px; background: #f0f0f0; display: flex; flex-direction: column; align-items: flex-start; }
.vscroll button { width: 15px; height: 20px; }
.vthumb { width: 15px; height: 17px; background: #cdcdcd; margin-top: 363px; }
.navbar { position: absolute; right: 19px; top: 2px; width: 36px; height: 118px; border: 2px solid #c2c2c2; border-radius: 7px; background: #f1f1f1; display: flex; flex-direction: column; align-items: center; }
.end { align-self: flex-end; margin: 1px 2px 0 0; }
.last { margin-top: auto; margin-bottom: 2px; }
.wheel { position: relative; margin: 9px 0 2px; }
.wheel b { position: absolute; right: -1px; bottom: 2px; font: 700 10px/10px "Liberation Sans", sans-serif; color: #6b98c9; }
.navbar hr { width: 26px; margin: 3px 0 7px; border: 0; border-top: 1px solid #bbb; }
.region + svg { margin-top: 6px; }

.browser { width: 101px; flex: none; border-left: 2px solid #ccc; background: #fff; overflow: hidden; }
.browser .head { padding-left: 4px; }
ul { list-style: none; margin: 0; padding: 0 0 0 5px; color: #000; }
li { display: flex; height: 18px; align-items: center; }
.cell { width: 20px; height: 18px; position: relative; flex: none; overflow: hidden; }
.short { width: 17px; }
.dots { stroke: #999; stroke-dasharray: 1 1; fill: none; }
.exp { position: absolute; left: 1px; top: 5px; width: 9px; height: 9px; border: 1px solid #8d8d8d; background: #fff; }
.ticon { width: 16px; margin-right: 4px; flex: none; }
.ttext { padding: 0 3px; line-height: 18px; }
.ticon + .ttext { padding-left: 2px; }
.cur { font-weight: 700; background: #e0e0e0; }

.notes { position: absolute; inset: 0; pointer-events: none; overflow: hidden; filter: drop-shadow(2px 2px 2px rgba(0, 0, 0, .6)); }
.mark { position: absolute; border: 2px solid #fb9c46; border-radius: 1px; }
.m1 { left: 264px; top: 138px; width: 210px; height: 29px; }
.m2 { right: 0; top: 135px; width: 223px; height: 35px; }
.m3 { left: 184px; top: 300px; width: 196px; height: 146px; }
.tails { position: absolute; inset: 0; width: 100%; height: 100%; }
.note { position: absolute; margin: 0; display: flex; align-items: center; padding: 0 10px; background: #5f7eba; color: #fff; font: 21px/26px Roboto, sans-serif; white-space: nowrap; }
.n1 { left: 467px; top: 327px; width: 207px; height: 55px; }
.n2 { left: 712px; top: 325px; width: 229px; height: 59px; }
.n3 { left: 974px; top: 247px; width: 307px; height: 67px; }
</style>
